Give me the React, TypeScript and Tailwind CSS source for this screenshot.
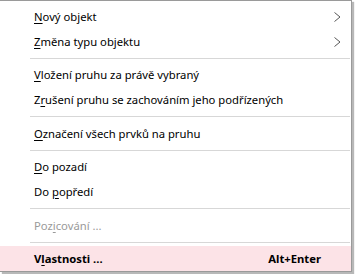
import React from "react";

type Item =
  | { kind: "sep"; h: number }
  | {
      kind: "item";
      pre: string;
      key: string;
      post: string;
      sub?: boolean;
      disabled?: boolean;
      active?: boolean;
      shortcut?: string;
    };

const items: Item[] = [
  { kind: "item", pre: "", key: "N", post: "ový objekt", sub: true },
  { kind: "item", pre: "", key: "Z", post: "měna typu objektu", sub: true },
  { kind: "sep", h: 8 },
  { kind: "item", pre: "", key: "V", post: "ložení pruhu za právě vybraný" },
  { kind: "item", pre: "Z", key: "r", post: "ušení pruhu se zachováním jeho podřízených" },
  { kind: "sep", h: 9 },
  { kind: "item", pre: "", key: "O", post: "značení všech prvků na pruhu" },
  { kind: "sep", h: 8 },
  { kind: "item", pre: "", key: "D", post: "o pozadí" },
  { kind: "item", pre: "Do ", key: "p", post: "opředí" },
  { kind: "sep", h: 9 },
  { kind: "item", pre: "Poz", key: "i", post: "cování ...", disabled: true },
  { kind: "sep", h: 8 },
  { kind: "item", pre: "V", key: "l", post: "astnosti ...", active: true, shortcut: "Alt+Enter" },
];

function Chevron() {
  return (
    <svg width="7" height="10" viewBox="0 0 7 10" className="shrink-0">
      <polyline points="0.5,0.5 6,5 0.5,9.5" fill="none" stroke="#444" strokeWidth="0.9" />
    </svg>
  );
}

export default function App() {
  return (
    <div className="h-[274px] w-[355px] overflow-hidden bg-white font-['Noto_Sans','Liberation_Sans',sans-serif] text-[11.25px] text-black">
      <div className="w-[352px] border-b border-r border-t border-[#9a9a9a] bg-white pt-[3px] shadow-[2px_2px_1px_rgba(0,0,0,0.28)]">
        {items.map((it, i) =>
          it.kind === "sep" ? (
            <div
              key={i}
              className={`flex items-center pl-[30px] pr-px ${it.h === 8 ? "h-[8px]" : "h-[9px]"}`}
            >
              <div className="h-px flex-1 bg-[#d7d7d7]" />
            </div>
          ) : (
            <div
              key={i}
              className={`flex h-[25px] items-center pl-[34px] pt-px ${
                it.active ? "bg-[#fce3e7] font-bold" : ""
              } ${it.disabled ? "text-[#9a9a9a]" : ""} ${it.sub ? "pr-[10px]" : "pr-[30px]"}`}
            >
              <span className="flex-1 whitespace-nowrap">
                {it.pre}
                <span className="underline decoration-1 underline-offset-2">{it.key}</span>
                {it.post}
              </span>
              {it.sub && <Chevron />}
              {it.shortcut && <span>{it.shortcut}</span>}
            </div>
          )
        )}
      </div>
    </div>
  );
}
